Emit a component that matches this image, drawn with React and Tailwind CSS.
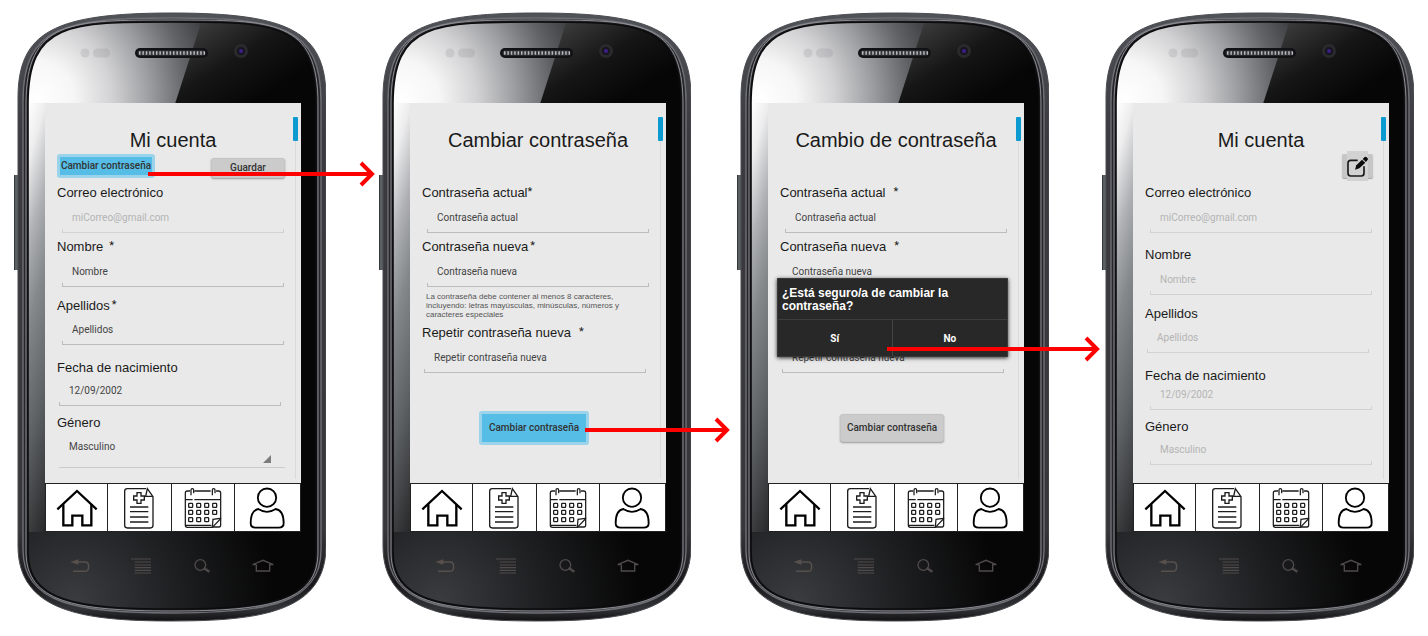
import React from "react";

const OUTER =
  "M4 86 C4 20 40 1 158 1 C276 1 312 20 312 86 V534 C312 600 246 609 158 609 C70 609 4 600 4 534 Z";
const RIM =
  "M9 90 C9 14 50 6 158 6 C266 6 307 14 307 90 V538 C307 592 252 601 158 601 C64 601 9 592 9 538 Z";
const FACE =
  "M14 92 C14 10 56 10 158 10 C260 10 302 10 302 92 V540 C302 589 256 597 158 597 C60 597 14 589 14 540 Z";

function PhoneBody({ id }) {
  const ref = (name) => `url(#${id}-${name})`;
  return (
    <svg className="absolute inset-0 h-full w-full" viewBox="0 0 312 610" aria-hidden="true">
      <defs>
        <clipPath id={`${id}-face`}>
          <path d={FACE} />
        </clipPath>
        <radialGradient id={`${id}-glow`} gradientUnits="userSpaceOnUse" cx="22" cy="86" r="190">
          <stop offset="0" stopColor="#ffffff" />
          <stop offset="0.2" stopColor="#f6f6f6" />
          <stop offset="0.4" stopColor="#d2d2d4" />
          <stop offset="0.6" stopColor="#9c9da0" />
          <stop offset="0.8" stopColor="#606265" />
          <stop offset="1" stopColor="#353638" />
        </radialGradient>
        <linearGradient id={`${id}-side`} gradientUnits="userSpaceOnUse" x1="14" y1="91" x2="149" y2="131">
          <stop offset="0" stopColor="#ffffff" />
          <stop offset="0.12" stopColor="#ededee" />
          <stop offset="0.28" stopColor="#b0b2b5" />
          <stop offset="0.45" stopColor="#84888b" />
          <stop offset="0.7" stopColor="#5c6063" />
          <stop offset="0.88" stopColor="#3a3b3d" />
          <stop offset="1" stopColor="#242527" />
        </linearGradient>
        <linearGradient id={`${id}-dark`} gradientUnits="userSpaceOnUse" x1="190" y1="10" x2="240" y2="90">
          <stop offset="0" stopColor="#3a3a3b" />
          <stop offset="0.5" stopColor="#161616" />
          <stop offset="1" stopColor="#060606" />
        </linearGradient>
        <radialGradient id={`${id}-chin`} gradientUnits="userSpaceOnUse" cx="60" cy="590" r="200">
          <stop offset="0" stopColor="#3a3c3f" />
          <stop offset="0.5" stopColor="#1f2022" />
          <stop offset="1" stopColor="#060606" />
        </radialGradient>
        <linearGradient id={`${id}-frame`} x1="0" y1="0" x2="0" y2="1">
          <stop offset="0" stopColor="#505358" />
          <stop offset="0.2" stopColor="#3a3a40" />
          <stop offset="0.85" stopColor="#37373b" />
          <stop offset="0.94" stopColor="#18181a" />
          <stop offset="0.98" stopColor="#333438" />
          <stop offset="1" stopColor="#101012" />
        </linearGradient>
      </defs>
      <rect x="0" y="163" width="5" height="95" rx="1" fill="#5b6163" />
      <rect x="0" y="163" width="1" height="95" fill="#33383a" />
      <path d={OUTER} fill={ref("frame")} stroke="#4a4b50" strokeWidth="1" />
      <path d={RIM} fill="#26262a" stroke="#6f6f76" strokeWidth="1.4" />
      <path d={FACE} fill="#060606" />
      <g clipPath={ref("face")}>
        <rect x="14" y="440" width="290" height="160" fill={ref("chin")} />
        <rect x="150" y="8" width="154" height="86" fill={ref("dark")} />
        <path d="M10 5 H189 L161 92 H10 Z" fill={ref("glow")} />
        <rect x="14" y="91" width="18" height="429" fill={ref("side")} />
      </g>
      <path d={FACE} fill="none" stroke="#0c0c0e" strokeWidth="1.6" />
      <path
        d="M12 92 C12 8 56 8 158 8 C260 8 304 8 304 92 V540 C304 590 256 599 158 599 C60 599 12 590 12 540 Z"
        fill="none"
        stroke="#9a9ba0"
        strokeWidth="0.9"
      />
      <circle cx="71" cy="41" r="4.5" fill="#808086" opacity="0.2" />
      <rect x="79" y="36.500" width="17" height="9" rx="4.500" fill="#808086" opacity="0.2" />
      <rect x="121" y="36" width="73" height="10" rx="5" fill="#121214" />
      <rect x="123.500" y="38.500" width="68" height="5" rx="2.500" fill="#37383b" />
      <path d="M125 41 H191" stroke="#b9b9bd" strokeWidth="3.400" strokeDasharray="1.500 1.900" />
      <circle cx="227" cy="39" r="7" fill="#2a2a2d" />
      <circle cx="227" cy="39" r="4" fill="#17151f" />
      <circle cx="227" cy="39" r="2" fill="#3d1f8a" />
    </svg>
  );
}

function HomeIcon() {
  return (
    <svg className="h-10 w-[42px]" viewBox="45 35 126 120" fill="none" stroke="#000" strokeWidth="7" aria-hidden="true">
      <path d="M49 99 L108 44 L167 99" />
      <path d="M67 84 V147 H94 V118 H124 V147 H151 V84" />
    </svg>
  );
}

function RecordIcon() {
  return (
    <svg className="h-[42px] w-8" viewBox="251 33 96 126" fill="none" stroke="#1d1d1d" strokeWidth="4" aria-hidden="true">
      <path d="M320 38 H264 Q256 38 256 46 V148 Q256 156 264 156 H333 Q341 156 341 148 V62 L324 38 L319 61 H341" />
      <path d="M293 50 H305 V60 H315 V72 H305 V82 H293 V72 H283 V60 H293 Z" />
      <path d="M272 93 H327 M272 107 H327 M272 123 H327 M272 138 H327" />
    </svg>
  );
}

function CalendarIcon() {
  const columns = [452, 476, 500, 524];
  const rows = [88, 109, 131];
  return (
    <svg className="h-[42px] w-[38px]" viewBox="432 33 114 126" fill="none" stroke="#1d1d1d" strokeWidth="3.800" aria-hidden="true">
      <path d="M450 45 H442 Q436 45 436 51 V148 Q436 154 442 154 H517 L542 128 V51 Q542 45 536 45 H528 M463 45 H512" />
      <path d="M436 71 H458 M463 71 H542 M436 148 H514" />
      <path d="M453 58 V42 Q453 38 457 38 Q461 38 461 42 V52 M517 58 V42 Q517 38 521 38 Q525 38 525 42 V52" />
      {rows.map((y) =>
        columns
          .filter((x) => !(x === 524 && y === 131))
          .map((x) => <rect key={`${x}-${y}`} x={x - 6} y={y - 6} width="12" height="12" rx="2" />)
      )}
      <path d="M517 153 L519 130 L541 127 M517 153 H537 Q542 153 542 147 V127" />
    </svg>
  );
}

function PersonIcon() {
  return (
    <svg className="h-[42px] w-9" viewBox="627 31 108 126" fill="none" stroke="#000" strokeWidth="5.500" aria-hidden="true">
      <circle cx="681" cy="63" r="27.500" />
      <path d="M655 97 C636 100 632 123 632 140 Q632 153 647 153 H716 Q731 153 731 140 C731 123 727 100 707 97 Q681 114 655 97 Z" />
    </svg>
  );
}

const NAV = [
  { label: "Inicio", Icon: HomeIcon },
  { label: "Historial", Icon: RecordIcon },
  { label: "Calendario", Icon: CalendarIcon },
  { label: "Perfil", Icon: PersonIcon },
];

function BottomNav() {
  return (
    <nav className="grid h-[49px] grid-cols-[62fr_63fr_63fr_66fr] gap-px border border-[#222] bg-[#222]">
      {NAV.map(({ label, Icon }) => (
        <a key={label} href="#" aria-label={label} className="flex items-center justify-center bg-white">
          <Icon />
        </a>
      ))}
    </nav>
  );
}

function SystemKeys() {
  return (
    <div className="ml-[31px] grid w-[256px] grid-cols-4 items-center justify-items-center pt-6 pr-2 pl-1">
      <button type="button" aria-label="Atrás">
        <svg className="h-5 w-5" viewBox="180 76 60 60" fill="none" stroke="#57504d" strokeWidth="4.500" aria-hidden="true">
          <path d="M198 94 H225 Q236 94 236 108 Q236 122 225 122 H189" />
          <path d="M181 94 L205 86 V102 Z" fill="#57504d" stroke="none" />
        </svg>
      </button>
      <button type="button" aria-label="Menú">
        <svg className="h-5 w-5" viewBox="363 79 60 60" fill="none" stroke="#504b4a" strokeWidth="3.400" aria-hidden="true">
          <path d="M363 88 H423 M374 97 H423 M374 106 H423 M374 114 H423 M374 122 H423 M374 130 H423" />
        </svg>
      </button>
      <button type="button" aria-label="Buscar">
        <svg className="h-5 w-5" viewBox="545 76 60 60" fill="none" stroke="#504b4a" strokeWidth="4" aria-hidden="true">
          <circle cx="570" cy="103" r="16" />
          <path d="M580 112 L597 123" strokeWidth="7" />
        </svg>
      </button>
      <button type="button" aria-label="Pantalla de inicio">
        <svg className="h-5 w-[22px]" viewBox="727 76 66 60" fill="none" stroke="#504b4a" strokeWidth="4" aria-hidden="true">
          <path d="M740 102 H729 L760 89 L791 102 H780 V121 H740 V102" />
        </svg>
      </button>
    </div>
  );
}

function Phone({ id, title, actions, overlay, arrow, children }) {
  return (
    <section className="relative h-[610px] w-[312px] shrink-0">
      <PhoneBody id={id} />
      <div className="relative flex flex-col pt-[91px]">
        <div className="relative ml-[31px] flex h-[429px] w-[256px] flex-col bg-[#e9e9e9]">
          <div className="flex min-h-0 flex-1">
            <form className="min-w-0 flex-1 pt-[25px]">
              <h1 className="pl-2 text-center text-[20px] leading-6 text-[#1a1a1a]">{title}</h1>
              <div className="flex h-[33px] items-start pr-2 pl-3">{actions}</div>
              {children}
            </form>
            <div className="mr-[3px] flex w-[5px] flex-col items-center pt-[14px] pb-1">
              <div className="h-6 w-[5px] rounded-[1px] bg-[#0b9bd1]" />
              <div className="w-px flex-1 bg-[#dadada]" />
            </div>
          </div>
          <BottomNav />
          {overlay}
        </div>
        <SystemKeys />
      </div>
      {arrow}
    </section>
  );
}

function FieldLabel({ id, label, star }) {
  return (
    <label htmlFor={id} className="flex pl-3 text-[13px] leading-4 text-[#1a1a1a]">
      {label}
      {star && <span className={`${star} font-[Roboto,sans-serif] text-[11px] leading-[14px]`}>*</span>}
    </label>
  );
}

function TextBox({ id, value, name, muted, inset, gap = "" }) {
  return (
    <div className={`w-[222px] ${inset} ${gap}`}>
      <input
        id={id}
        type="text"
        aria-label={name}
        defaultValue={value}
        disabled={muted}
        className={`block h-5 w-full bg-transparent px-[10px] pb-1 font-[Roboto,sans-serif] text-[10px] leading-4 outline-none ${
          muted ? "text-[#b4b4b4]" : "text-[#444]"
        }`}
      />
      <div className={`h-1 border-x border-b ${muted ? "border-[#d2d2d2]" : "border-[#bcbcbc]"}`} />
    </div>
  );
}

function Field({ id, label, value, star, muted, space = "", inset = "ml-[17px]", gap = "mt-2" }) {
  return (
    <div className={space}>
      <FieldLabel id={id} label={label} star={star} />
      <TextBox id={id} value={value} muted={muted} inset={inset} gap={gap} />
    </div>
  );
}

function GenderField() {
  return (
    <div className="mt-[9px]">
      <FieldLabel id="a-genero" label="Género" />
      <div className="mt-2 ml-[14px] w-[226px] border-b border-[#cbcbcb]">
        <select
          id="a-genero"
          className="block h-4 w-full appearance-none bg-transparent px-[10px] font-[Roboto,sans-serif] text-[10px] leading-4 text-[#444] outline-none"
        >
          <option>Masculino</option>
        </select>
        <div className="flex h-3 justify-end pr-[14px]">
          <svg className="h-2 w-2" viewBox="0 0 8 8" aria-hidden="true">
            <path d="M8 0 V8 H0 Z" fill="#7c7c7c" />
          </svg>
        </div>
      </div>
    </div>
  );
}

function Button({ primary, className, children }) {
  return (
    <button
      type="button"
      className={`flex items-center justify-center rounded-[3px] font-[Roboto,sans-serif] text-[10px] leading-3 font-medium whitespace-nowrap text-[#333] ${
        primary
          ? "border-[3px] border-[#9bd3ea] bg-[#56bde6]"
          : "border border-[#c4c4c4] bg-[#cbcbcb] shadow-[0_1px_2px_rgba(0,0,0,0.35)]"
      } ${className}`}
    >
      {children}
    </button>
  );
}

function EditButton() {
  return (
    <button
      type="button"
      aria-label="Editar"
      className="ml-auto flex h-7 w-[31px] items-center justify-center"
    >
      <span className="flex h-6 w-full items-center justify-center rounded-[2px] bg-[#c6c6c6] shadow-[0_1px_1px_rgba(0,0,0,0.3)]">
        <span className="flex h-[30px] w-[21px] shrink-0 items-center justify-center bg-[#d2d2d2]">
          <svg className="h-[21px] w-[21px]" viewBox="771 191 63 63" fill="none" aria-hidden="true">
            <path
              d="M803 204 H782 Q774 204 774 212 V243 Q774 251 782 251 H814 Q822 251 822 243 V222"
              stroke="#1a1a1a"
              strokeWidth="5"
            />
            <path d="M795 232 L799 219 L816 202 L826 211 L808 228 Z" fill="#0a0a0a" />
            <path d="M818 200 L824 194 Q827 192 830 195 L833 198 Q835 201 832 204 L828 209 Z" fill="#0a0a0a" />
          </svg>
        </span>
      </span>
    </button>
  );
}

function Arrow({ length, className }) {
  return (
    <svg
      className={`absolute z-10 h-[26px] ${className}`}
      viewBox={`0 0 ${length} 26`}
      fill="none"
      stroke="#ff0000"
      strokeWidth="4"
      aria-hidden="true"
    >
      <path d={`M0 13 H${length - 3}`} />
      <path d={`M${length - 14} 2 L${length - 3} 13 L${length - 14} 24`} />
    </svg>
  );
}

function ConfirmDialog() {
  return (
    <div
      role="dialog"
      aria-labelledby="confirm-title"
      className="absolute top-[175px] left-[9px] flex h-[79px] w-[231px] flex-col border border-[#3a3a3a] bg-[#282828] text-white shadow-[0_1px_4px_rgba(0,0,0,0.8)]"
    >
      <h2 id="confirm-title" className="h-10 px-1 pt-2 text-[12px] leading-[13px] font-bold">
        ¿Está seguro/a de cambiar la contraseña?
      </h2>
      <div className="grid flex-1 grid-cols-2 divide-x divide-[#444] border-t border-[#3c3c3c] font-[Roboto,sans-serif] text-[10px] font-bold">
        <button type="button">Sí</button>
        <button type="button">No</button>
      </div>
    </div>
  );
}

export default function App() {
  return (
    <main className="min-h-screen bg-white font-['Liberation_Sans',Arial,sans-serif]">
      <div className="flex pt-3 pl-[14px]">
        <Phone
          id="a"
          title="Mi cuenta"
          actions={
            <>
              <Button primary className="mt-0.5 h-6 w-[98px]">Cambiar contraseña</Button>
              <Button className="mt-1.5 ml-auto h-5 w-[74px]">Guardar</Button>
            </>
          }
          arrow={<Arrow length={227} className="top-[149px] left-[134px] w-[227px]" />}
        >
          <Field id="a-correo" label="Correo electrónico" value="miCorreo@gmail.com" muted />
          <Field id="a-nombre" label="Nombre" value="Nombre" star="pl-1.5" space="mt-1.5" />
          <Field id="a-apellidos" label="Apellidos" value="Apellidos" star="pl-0.5" space="mt-[11px]" gap="mt-[7px]" />
          <Field id="a-fecha" label="Fecha de nacimiento" value="12/09/2002" space="mt-[15px]" inset="ml-[14px]" gap="mt-1.5" />
          <GenderField />
        </Phone>

        <div className="w-[53px] shrink-0" />
        <Phone
          id="b"
          title="Cambiar contraseña"
          arrow={<Arrow length={145} className="top-[405px] left-[206px] w-[145px]" />}
        >
          <Field id="b-actual" label="Contraseña actual" value="Contraseña actual" star="pl-0" />
          <Field id="b-nueva" label="Contraseña nueva" value="Contraseña nueva" star="pl-0.5" space="mt-1.5" />
          <p className="mt-[5px] ml-4 w-[210px] text-[8px] leading-[9px] text-[#555]">
            La contraseña debe contener al menos 8 caracteres, incluyendo: letras mayúsculas, minúsculas, números y
            caracteres especiales
          </p>
          <Field
            id="b-repetir"
            label="Repetir contraseña nueva"
            value="Repetir contraseña nueva"
            star="pl-2"
            space="mt-1.5"
            inset="ml-[14px]"
          />
          <div className="mt-[38px] flex justify-center">
            <Button primary className="h-[34px] w-[110px]">Cambiar contraseña</Button>
          </div>
        </Phone>

        <div className="w-[46px] shrink-0" />
        <Phone
          id="c"
          title="Cambio de contraseña"
          overlay={<ConfirmDialog />}
          arrow={<Arrow length={213} className="top-[324px] left-[150px] w-[213px]" />}
        >
          <Field id="c-actual" label="Contraseña actual" value="Contraseña actual" star="pl-2" />
          <Field id="c-nueva" label="Contraseña nueva" value="Contraseña nueva" star="pl-2" space="mt-1.5" inset="ml-[14px]" />
          <TextBox
            id="c-repetir"
            name="Repetir contraseña nueva"
            value="Repetir contraseña nueva"
            gap="mt-[62px]"
            inset="ml-[14px]"
          />
          <div className="mt-[41px] flex justify-center">
            <Button className="h-7 w-[104px]">Cambiar contraseña</Button>
          </div>
        </Phone>

        <div className="w-[53px] shrink-0" />
        <Phone id="d" title="Mi cuenta" actions={<EditButton />}>
          <Field id="d-correo" label="Correo electrónico" value="miCorreo@gmail.com" muted />
          <Field id="d-nombre" label="Nombre" value="Nombre" muted space="mt-[14px]" />
          <Field id="d-apellidos" label="Apellidos" value="Apellidos" muted space="mt-[11px]" inset="ml-[14px]" gap="mt-[7px]" />
          <Field id="d-fecha" label="Fecha de nacimiento" value="12/09/2002" muted space="mt-[15px]" gap="mt-0.5" />
          <Field id="d-genero" label="Género" value="Masculino" muted space="mt-[9px]" gap="mt-1.5" />
        </Phone>
      </div>
    </main>
  );
}
